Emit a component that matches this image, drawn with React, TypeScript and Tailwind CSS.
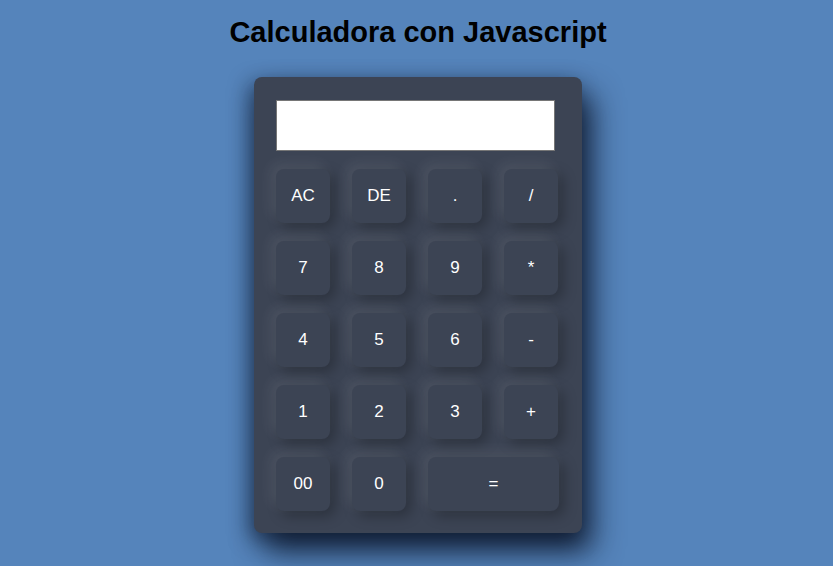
const keys: Array<{ label: string; wide?: boolean }> = [
  { label: "AC" },
  { label: "DE" },
  { label: "." },
  { label: "/" },
  { label: "7" },
  { label: "8" },
  { label: "9" },
  { label: "*" },
  { label: "4" },
  { label: "5" },
  { label: "6" },
  { label: "-" },
  { label: "1" },
  { label: "2" },
  { label: "3" },
  { label: "+" },
  { label: "00" },
  { label: "0" },
  { label: "=", wide: true },
];

export default function App() {
  return (
    <div className="flex min-h-[566px] flex-col items-center bg-[#5584bb] pl-[3px] font-['Liberation_Sans',Arial,sans-serif]">
      <h1 className="mt-[15px] text-[29px] font-bold leading-[34px] text-black">Calculadora con Javascript</h1>

      <div className="mt-[28px] w-[328px] rounded-lg bg-[#3c4454] pb-[22px] pl-[22px] pr-[24px] pt-[23px] shadow-[10px_18px_30px_rgba(10,20,40,0.85),-5px_6px_20px_rgba(10,20,40,0.5)]">
        <input
          readOnly
          className="mb-[18px] block h-[51px] w-[279px] border border-[#767676] bg-white outline-none"
        />

        <div className="grid grid-cols-[54px_54px_54px_54px] gap-x-[22px] gap-y-[18px]">
          {keys.map((k) => (
            <button
              key={k.label}
              className={
                "flex h-[54px] items-center justify-center rounded-lg bg-[#3c4454] text-[17px] text-white shadow-[-5px_-5px_14px_rgba(255,255,255,0.09),5px_5px_14px_rgba(0,0,0,0.28)] " +
                (k.wide ? "col-span-2 w-[131px]" : "w-[54px]")
              }
            >
              {k.label}
            </button>
          ))}
        </div>
      </div>
    </div>
  );
}
